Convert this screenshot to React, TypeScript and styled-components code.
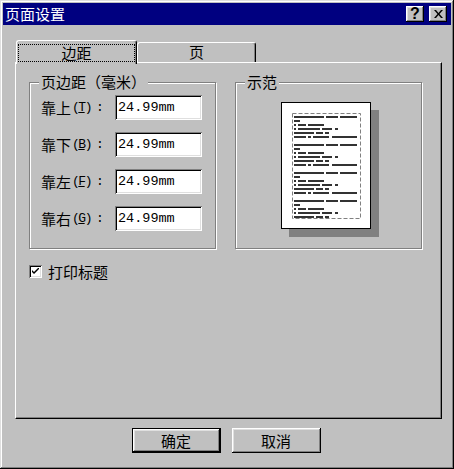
import React from "react";
import styled, { createGlobalStyle } from "styled-components";

const GlobalStyle = createGlobalStyle`
  html, body {
    margin: 0;
    padding: 0;
    background: #c0c0c0;
  }
  * {
    box-sizing: border-box;
  }
`;

const cjk = `"Noto Sans CJK SC", "Noto Sans", sans-serif`;
const mono = `"Liberation Mono", "DejaVu Sans Mono", monospace`;

const Window = styled.div`
  width: 454px;
  height: 469px;
  background: #c0c0c0;
  padding: 3px;
  display: flex;
  flex-direction: column;
  font-family: ${cjk};
  color: #000;
  box-shadow: inset -1px -1px 0 #000, inset 1px 1px 0 #dfdfdf,
    inset -2px -2px 0 #808080, inset 2px 2px 0 #fff;
`;

const TitleBar = styled.div`
  height: 22px;
  background: #000080;
  display: flex;
  align-items: center;
  padding: 0 4px 0 2px;
`;

const Title = styled.span`
  flex: 1;
  color: #fff;
  font-size: 15px;
  line-height: 22px;
`;

const CaptionButton = styled.button`
  width: 18px;
  height: 16px;
  margin-left: 5px;
  padding: 0;
  border: none;
  background: #c0c0c0;
  display: flex;
  align-items: center;
  justify-content: center;
  font-family: "Liberation Sans", Arial, sans-serif;
  font-weight: bold;
  font-size: 16px;
  line-height: 1;
  color: #000;
  box-shadow: inset -1px -1px 0 #000, inset 1px 1px 0 #fff,
    inset -2px -2px 0 #808080, inset 2px 2px 0 #dfdfdf;
`;

const Body = styled.div`
  flex: 1;
  display: flex;
  flex-direction: column;
  padding: 15px 9px 0 12px;
`;

const TabStrip = styled.div`
  height: 22px;
  display: flex;
  align-items: flex-end;
  padding-left: 1px;
`;

const Tab = styled.div<{ $active?: boolean }>`
  position: relative;
  z-index: ${(p) => (p.$active ? 1 : 0)};
  width: ${(p) => (p.$active ? 121 : 119)}px;
  height: ${(p) => (p.$active ? 24 : 20)}px;
  margin-bottom: ${(p) => (p.$active ? -2 : 0)}px;
  background: #c0c0c0;
  border-top: 1px solid #fff;
  border-left: 1px solid #fff;
  border-right: 1px solid #000;
  border-radius: 3px 3px 0 0;
  box-shadow: inset -1px 0 0 #808080;
  display: flex;
  justify-content: center;
  padding: ${(p) => (p.$active ? "3px 1px 3px 1px" : "0")};
  font-size: 15px;
  line-height: 18px;
`;

const TabLabel = styled.span<{ $focused?: boolean }>`
  flex: 1;
  text-align: center;
  height: 18px;
  border: 1px dotted ${(p) => (p.$focused ? "#000" : "transparent")};
  line-height: 16px;
`;

const Panel = styled.div`
  width: 427px;
  height: 357px;
  border-top: 1px solid #fff;
  border-left: 1px solid #fff;
  border-right: 1px solid #000;
  border-bottom: 1px solid #000;
  box-shadow: inset -1px -1px 0 #808080;
  padding: 19px 0 0 13px;
  display: flex;
  flex-direction: column;
`;

const Groups = styled.div`
  display: grid;
  grid-template-columns: 187px 187px;
  column-gap: 19px;
`;

const Group = styled.div`
  position: relative;
  height: 167px;
  border: 1px solid #808080;
  box-shadow: inset 1px 1px 0 #fff, 1px 1px 0 #fff;
`;

const Legend = styled.span`
  position: absolute;
  top: -10px;
  left: 9px;
  padding: 0 2px;
  background: #c0c0c0;
  font-size: 15px;
  line-height: 18px;
`;

const Fields = styled.div`
  display: flex;
  flex-direction: column;
  gap: 12px;
  padding: 12px 0 0 11px;
`;

const FieldRow = styled.div`
  display: flex;
  align-items: center;
  height: 25px;
`;

const FieldLabel = styled.label`
  width: 74px;
  font-size: 15px;
  white-space: nowrap;
  display: flex;
  align-items: center;
`;

const Hotkey = styled.span`
  font-family: ${mono};
  font-size: 13px;
  letter-spacing: -1.5px;
  margin-left: 1px;
`;

const Colon = styled.span`
  font-family: ${mono};
  font-size: 13px;
  margin-left: 5px;
`;

const TextInput = styled.input`
  width: 87px;
  height: 25px;
  padding: 0 0 0 3px;
  margin: 0;
  border: none;
  background: #fff;
  font-family: ${mono};
  font-size: 13.5px;
  color: #000;
  outline: none;
  box-shadow: inset 1px 1px 0 #808080, inset -1px -1px 0 #fff,
    inset 2px 2px 0 #000, inset -2px -2px 0 #dfdfdf;
`;

const Preview = styled.div`
  padding: 19px 0 0 45px;
`;

const Page = styled.div`
  width: 90px;
  height: 127px;
  background: #fff;
  border: 1px solid #000;
  box-shadow: 8px 8px 0 #808080;
`;

const CheckRow = styled.label`
  display: flex;
  align-items: center;
  gap: 6px;
  margin-top: 16px;
  font-size: 15px;
  height: 13px;
`;

const CheckBox = styled.span`
  width: 13px;
  height: 13px;
  background: #fff;
  display: flex;
  align-items: center;
  justify-content: center;
  box-shadow: inset 1px 1px 0 #808080, inset -1px -1px 0 #fff,
    inset 2px 2px 0 #000, inset -2px -2px 0 #dfdfdf;
`;

const Footer = styled.div`
  display: flex;
  justify-content: center;
  gap: 11px;
  padding: 9px 5px 0 0;
`;

const PushButton = styled.button<{ $default?: boolean }>`
  width: 89px;
  height: 25px;
  padding: 0;
  margin: 0;
  background: #c0c0c0;
  font-family: ${cjk};
  font-size: 15px;
  color: #000;
  border: ${(p) => (p.$default ? "1px solid #000" : "none")};
  box-shadow: inset -1px -1px 0 #000, inset 1px 1px 0 #fff,
    inset -2px -2px 0 #808080, inset 2px 2px 0 #dfdfdf;
`;

const margins = [
  { label: "靠上", key: "T" },
  { label: "靠下", key: "B" },
  { label: "靠左", key: "F" },
  { label: "靠右", key: "G" },
];

// word segments per line of one text block: [x, width]
const blockLines: [number, number][][] = [
  [[12, 30], [44, 12], [58, 17]],
  [[12, 6]],
  [[12, 2], [16, 8], [26, 16]],
  [[12, 2], [16, 22], [40, 10], [53, 3]],
  [[12, 20], [34, 7], [43, 4]],
  [[12, 12], [26, 3], [31, 16], [50, 25]],
];

function PagePreview() {
  const blocks = [13, 41, 69, 97];
  return (
    <svg width="88" height="125" viewBox="0 0 88 125">
      <rect
        x="10.5"
        y="10.5"
        width="68"
        height="105"
        fill="none"
        stroke="#808080"
        strokeDasharray="4 2"
      />
      {blocks.map((by, b) =>
        blockLines.slice(0, b === 3 ? 5 : 6).map((line, i) =>
          line.map(([x, w], j) => (
            <rect
              key={`${b}-${i}-${j}`}
              x={x}
              y={by + i * 4}
              width={w}
              height={2}
              fill="#000"
              opacity={0.8}
            />
          ))
        )
      )}
    </svg>
  );
}

function App() {
  return (
    <>
      <GlobalStyle />
      <Window>
        <TitleBar>
          <Title>页面设置</Title>
          <CaptionButton>?</CaptionButton>
          <CaptionButton>
            <svg width="9" height="8" viewBox="0 0 9 8">
              <path d="M0 0h2l2.5 3 2.5-3h2L5.5 4 9 8H7L4.5 5 2 8H0l3.5-4z" fill="#000" />
            </svg>
          </CaptionButton>
        </TitleBar>
        <Body>
          <TabStrip>
            <Tab $active>
              <TabLabel $focused>边距</TabLabel>
            </Tab>
            <Tab>
              <TabLabel>页</TabLabel>
            </Tab>
          </TabStrip>
          <Panel>
            <Groups>
              <Group>
                <Legend>页边距（毫米）</Legend>
                <Fields>
                  {margins.map((m) => (
                    <FieldRow key={m.key}>
                      <FieldLabel>
                        {m.label}
                        <Hotkey>
                          (<u>{m.key}</u>)
                        </Hotkey>
                        <Colon>:</Colon>
                      </FieldLabel>
                      <TextInput defaultValue="24.99mm" />
                    </FieldRow>
                  ))}
                </Fields>
              </Group>
              <Group>
                <Legend>示范</Legend>
                <Preview>
                  <Page>
                    <PagePreview />
                  </Page>
                </Preview>
              </Group>
            </Groups>
            <CheckRow>
              <CheckBox>
                <svg width="7" height="7" viewBox="0 0 7 7">
                  <path d="M0 2l2 2 5-5v2L2 6 0 4z" fill="#000" />
                </svg>
              </CheckBox>
              打印标题
            </CheckRow>
          </Panel>
          <Footer>
            <PushButton $default>确定</PushButton>
            <PushButton>取消</PushButton>
          </Footer>
        </Body>
      </Window>
    </>
  );
}

export default App;
